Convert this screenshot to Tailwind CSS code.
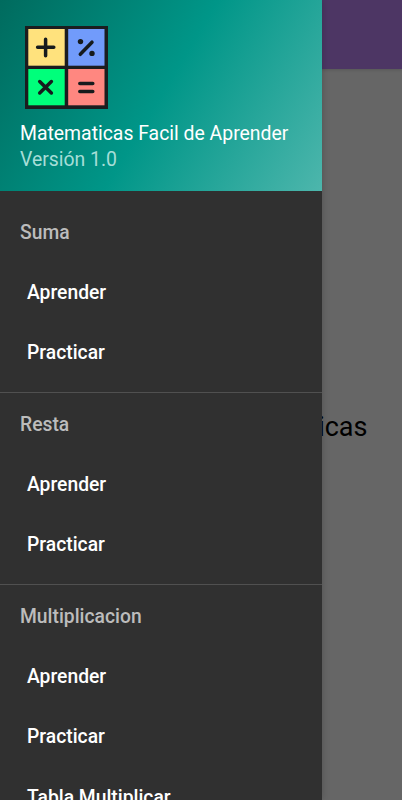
<!DOCTYPE html>
<html lang="es">
<head>
  <meta charset="UTF-8">
  <meta name="viewport" content="width=device-width, initial-scale=1.0">
  <title>Matematicas Facil de Aprender</title>
  <script src="https://cdn.jsdelivr.net/npm/@tailwindcss/browser@4"></script>
</head>
<body class="relative h-screen overflow-hidden bg-[#666666] font-['Roboto',sans-serif]">
  <!-- Screen behind the drawer -->
  <div class="flex flex-col h-full">
    <header class="h-[69px] shrink-0 bg-[#4d3664] shadow-[0_1px_3px_rgba(0,0,0,0.15)]"></header>
    <main class="grow flex items-center justify-end pr-[34.5px] pb-[15px]">
      <p class="text-[27px] leading-8 text-black">Matematicas</p>
    </main>
  </div>

  <!-- Navigation drawer -->
  <aside class="absolute inset-y-0 left-0 w-[321.5px] overflow-hidden bg-[#303030] shadow-[0_0_8px_rgba(0,0,0,0.2)]">
    <div class="h-[191px] pt-[26px] pl-5 bg-[linear-gradient(121deg,#006b5e,#009688,#4db6ac)]">
      <svg class="block ml-[4.5px] w-[83px] h-[83px]" viewBox="0 0 83 83" fill="none">
        <rect width="83" height="83" fill="#1b1d1f"/>
        <rect x="3.3" y="3" width="36.4" height="36.7" fill="#ffe27d"/>
        <rect x="43.2" y="3" width="36.3" height="36.7" fill="#719bfb"/>
        <rect x="3.3" y="43" width="36.4" height="36.3" fill="#00ff7b"/>
        <rect x="43.2" y="43" width="36.3" height="36.3" fill="#ff8780"/>
        <g stroke="#161b1d" stroke-width="3.5" stroke-linecap="round">
          <path d="M12.6 21.3h16.2M20.6 13.2v16.6"/>
          <path d="M55.3 28.3L67 16.2"/>
          <path d="M14.7 55.5L26.4 67M26.4 55.5L14.7 67"/>
          <path d="M54.8 57.4h13M54.8 65.4h13"/>
        </g>
        <circle cx="55.5" cy="15.6" r="2.7" fill="#161b1d"/>
        <circle cx="67" cy="27.4" r="2.7" fill="#161b1d"/>
      </svg>
      <h1 class="mt-[12px] text-[19.4px] leading-[26px] text-white whitespace-nowrap">Matematicas Facil de Aprender</h1>
      <p class="text-[19.4px] leading-[26px] text-[#a6ded7]">Versión 1.0</p>
    </div>

    <nav class="text-[19.3px] font-medium text-white whitespace-nowrap">
      <section class="h-[201px] pt-[12px]">
        <h2 class="flex items-center h-[60px] pl-5 text-[#bcbcbc]">Suma</h2>
        <a class="flex items-center h-[60.5px] pl-[27px]">Aprender</a>
        <a class="flex items-center h-[60.5px] pl-[27px]">Practicar</a>
      </section>
      <section class="h-[192px] pt-[2px] border-t border-[#505050]">
        <h2 class="flex items-center h-[60px] pl-5 text-[#bcbcbc]">Resta</h2>
        <a class="flex items-center h-[60.5px] pl-[27px]">Aprender</a>
        <a class="flex items-center h-[60.5px] pl-[27px]">Practicar</a>
      </section>
      <section class="pt-[2px] border-t border-[#505050]">
        <h2 class="flex items-center h-[60px] pl-5 text-[#bcbcbc]">Multiplicacion</h2>
        <a class="flex items-center h-[60.5px] pl-[27px]">Aprender</a>
        <a class="flex items-center h-[60.5px] pl-[27px]">Practicar</a>
        <a class="flex items-center h-[60.5px] pl-[27px]">Tabla Multiplicar</a>
      </section>
    </nav>
  </aside>
</body>
</html>
